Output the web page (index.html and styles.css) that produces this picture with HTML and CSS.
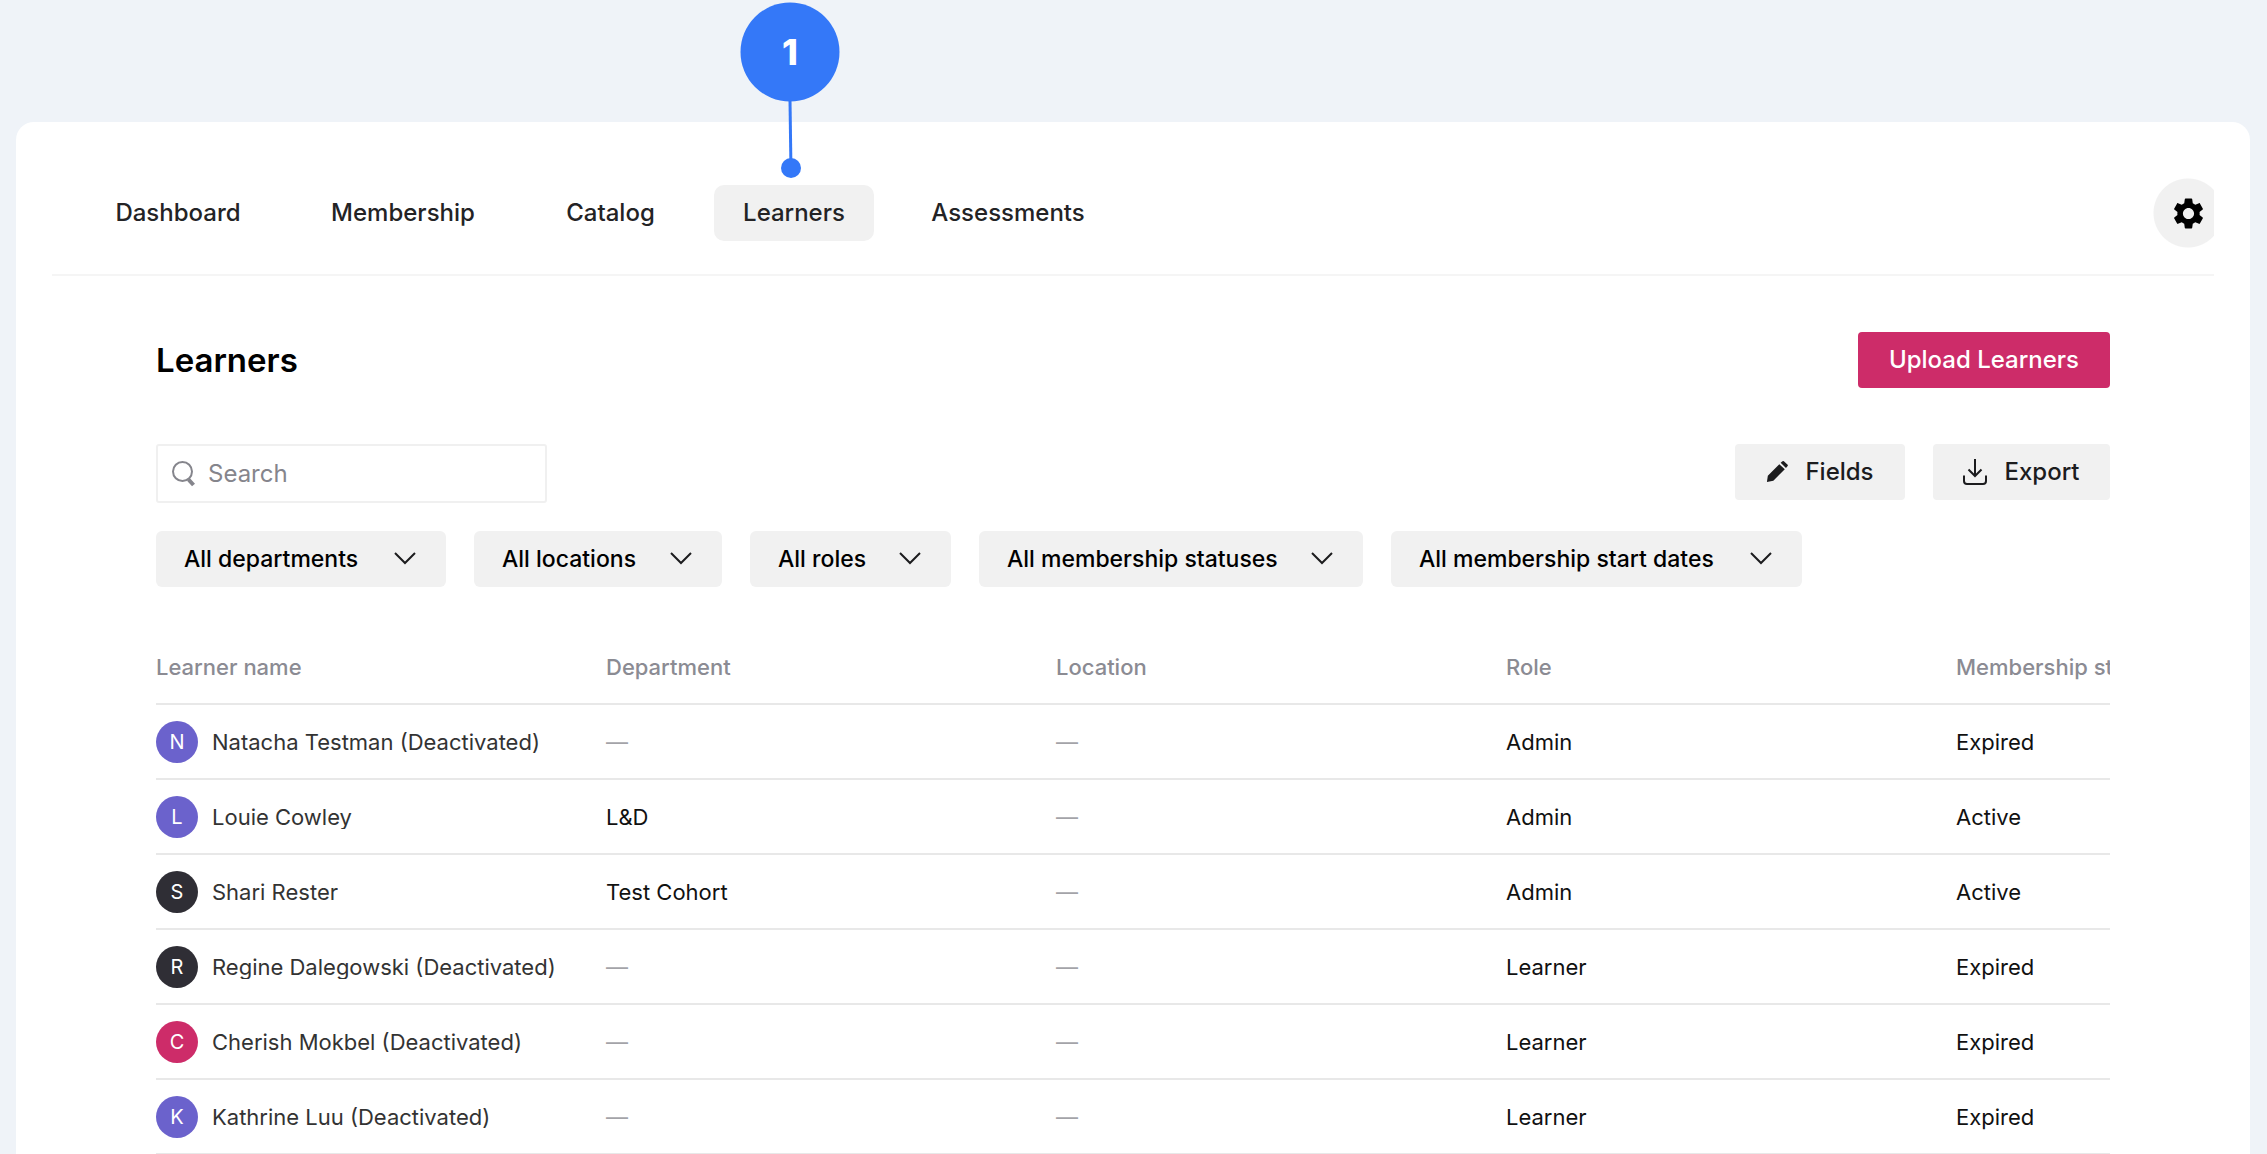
FILE: index.html
```html
<!DOCTYPE html>
<html lang="en">
<head>
<meta charset="utf-8">
<meta name="viewport" content="width=device-width, initial-scale=1">
<title>Learners</title>
<link rel="stylesheet" href="styles.css">
</head>
<body>
<div class="card">
  <header class="topbar">
    <nav class="nav" aria-label="Main">
      <a class="nav-link" href="#dashboard">Dashboard</a>
      <a class="nav-link" href="#membership">Membership</a>
      <a class="nav-link" href="#catalog">Catalog</a>
      <a class="nav-link nav-link-active" href="#learners" aria-current="page">Learners
        <span class="callout" aria-hidden="true">
          <svg class="callout-pin" viewBox="0 0 100 180"><path d="M50 98L51 170" stroke="currentColor" stroke-width="3"/><circle cx="50" cy="50" r="49.500" fill="currentColor"/><circle cx="51" cy="166" r="10" fill="currentColor"/></svg>
          <span class="callout-number">1</span>
        </span>
      </a>
      <a class="nav-link" href="#assessments">Assessments</a>
    </nav>
    <button class="settings" type="button" aria-label="Settings">
      <svg class="icon-gear" viewBox="2 2 20 20"><path fill="currentColor" d="M19.140 12.940c.04-.3.060-.61.060-.94 0-.32-.02-.64-.07-.94l2.030-1.580c.18-.14.230-.41.120-.61l-1.920-3.320c-.12-.22-.37-.29-.59-.22l-2.390.960c-.5-.38-1.030-.7-1.620-.94L14.400 2.810c-.04-.24-.24-.41-.48-.41h-3.840c-.24 0-.43.170-.47.410L9.250 5.350c-.59.240-1.130.57-1.620.94L5.240 5.330c-.22-.08-.47 0-.59.220L2.740 8.870c-.12.210-.08.470.120.610l2.030 1.580c-.05.3-.09.630-.09.940s.02.640.070.940l-2.030 1.580c-.18.140-.23.410-.12.610l1.920 3.320c.12.220.37.290.59.220l2.390-.96c.5.380 1.030.7 1.620.940l.36 2.540c.05.240.240.410.480.410h3.840c.24 0 .44-.17.470-.41l.36-2.540c.59-.24 1.130-.56 1.620-.94l2.390.960c.22.080.470 0 .59-.22l1.920-3.320c.12-.22.070-.47-.12-.61l-2.010-1.580zM12 15.600c-1.980 0-3.600-1.620-3.600-3.600s1.620-3.600 3.600-3.600 3.600 1.620 3.600 3.600-1.620 3.600-3.600 3.600z"/></svg>
    </button>
  </header>

  <main class="content">
    <div class="row">
      <h1 class="title">Learners</h1>
      <button class="button button-primary" type="button">Upload Learners</button>
    </div>

    <div class="row row-tools">
      <label class="search">
        <svg class="icon-search" viewBox="0 0 24 26" fill="none" stroke="currentColor"><circle cx="10.500" cy="10.500" r="9.500" stroke-width="2"/><path d="M16.500 18.500L21.500 24" stroke-width="4"/></svg>
        <input class="search-input" type="search" placeholder="Search" aria-label="Search">
      </label>
      <div class="actions">
        <button class="button button-fields" type="button">
          <svg class="icon-pencil" viewBox="0 0 24 24" fill="currentColor"><path d="M1 23l1-7L14.500 3.500 20.500 9 8 21.500zM16 2l2-1.600q.8-.6 1.500 0L23.600 4q.6.700 0 1.400L21.800 7.600z"/></svg>
          Fields
        </button>
        <button class="button button-export" type="button">
          <svg class="icon-export" viewBox="0 0 24 26" fill="none" stroke="currentColor" stroke-width="2"><path d="M12 0v17M5.500 10.500L12 17l6.500-6.500M1 16.500V22q0 3 3 3h16q3 0 3-3v-5.500"/></svg>
          Export
        </button>
      </div>
    </div>

    <div class="filters">
      <span class="filter"><select class="select select-departments" aria-label="Department"><option>All departments</option></select><svg class="icon-chevron" viewBox="0 0 22 13"><path d="M1 1l10 10L21 1" fill="none" stroke="currentColor" stroke-width="2"/></svg></span>
      <span class="filter"><select class="select select-locations" aria-label="Location"><option>All locations</option></select><svg class="icon-chevron" viewBox="0 0 22 13"><path d="M1 1l10 10L21 1" fill="none" stroke="currentColor" stroke-width="2"/></svg></span>
      <span class="filter"><select class="select select-roles" aria-label="Role"><option>All roles</option></select><svg class="icon-chevron" viewBox="0 0 22 13"><path d="M1 1l10 10L21 1" fill="none" stroke="currentColor" stroke-width="2"/></svg></span>
      <span class="filter"><select class="select select-statuses" aria-label="Membership status"><option>All membership statuses</option></select><svg class="icon-chevron" viewBox="0 0 22 13"><path d="M1 1l10 10L21 1" fill="none" stroke="currentColor" stroke-width="2"/></svg></span>
      <span class="filter"><select class="select select-dates" aria-label="Membership start date"><option>All membership start dates</option></select><svg class="icon-chevron" viewBox="0 0 22 13"><path d="M1 1l10 10L21 1" fill="none" stroke="currentColor" stroke-width="2"/></svg></span>
    </div>

    <div class="table-scroll">
      <table class="table">
        <thead>
          <tr><th scope="col">Learner name</th><th scope="col">Department</th><th scope="col">Location</th><th scope="col">Role</th><th scope="col">Membership status</th></tr>
        </thead>
        <tbody>
          <tr><td><div class="person"><span class="avatar avatar-violet">N</span><span class="name">Natacha Testman (Deactivated)</span></div></td><td class="empty">—</td><td class="empty">—</td><td>Admin</td><td>Expired</td></tr>
          <tr><td><div class="person"><span class="avatar avatar-violet">L</span><span class="name">Louie Cowley</span></div></td><td>L&amp;D</td><td class="empty">—</td><td>Admin</td><td>Active</td></tr>
          <tr><td><div class="person"><span class="avatar avatar-dark">S</span><span class="name">Shari Rester</span></div></td><td>Test Cohort</td><td class="empty">—</td><td>Admin</td><td>Active</td></tr>
          <tr><td><div class="person"><span class="avatar avatar-dark">R</span><span class="name">Regine Dalegowski (Deactivated)</span></div></td><td class="empty">—</td><td class="empty">—</td><td>Learner</td><td>Expired</td></tr>
          <tr><td><div class="person"><span class="avatar avatar-pink">C</span><span class="name">Cherish Mokbel (Deactivated)</span></div></td><td class="empty">—</td><td class="empty">—</td><td>Learner</td><td>Expired</td></tr>
          <tr><td><div class="person"><span class="avatar avatar-violet">K</span><span class="name">Kathrine Luu (Deactivated)</span></div></td><td class="empty">—</td><td class="empty">—</td><td>Learner</td><td>Expired</td></tr>
        </tbody>
      </table>
    </div>
  </main>
</div>
</body>
</html>
```
FILE: styles.css
```css
*,
*::before,
*::after {
  box-sizing: border-box;
}

body {
  margin: 0;
  padding: 122px 17px 0 16px;
  min-height: 100vh;
  display: flex;
  flex-direction: column;
  background: #eff3f8;
  color: #1c1c1e;
  font-family: Inter, "Liberation Sans", sans-serif;
  font-size: 22px;
  line-height: 28px;
}

button,
input,
select {
  font: inherit;
  color: inherit;
}

svg {
  display: block;
  flex: none;
}

.card {
  flex: 1;
  min-width: 0;
  padding: 0 36px;
  border-radius: 18px 18px 0 0;
  background: #fff;
}

/* Top navigation */

.topbar {
  display: flex;
  align-items: center;
  justify-content: space-between;
  height: 154px;
  padding: 28px 0 0 33px;
  border-bottom: 2px solid #f5f5f5;
}

.topbar {
  padding-top: 30px;
}

.nav {
  display: grid;
  grid-template-columns: 186px 208px 151px 160px 212px;
  gap: 28px;
}

.nav-link {
  position: relative;
  display: flex;
  align-items: center;
  justify-content: center;
  height: 56px;
  border-radius: 10px;
  color: #232325;
  font-size: 24px;
  font-weight: 500;
  text-decoration: none;
}

.nav-link-active {
  background: #f1f1f1;
}

.settings {
  flex: none;
  width: 61px;
  height: 70px;
  padding: 0 0 0 20px;
  border: 0;
  border-radius: 0;
  background: radial-gradient(circle at 35px 35px, #f1f1f1 34px, transparent 35px);
  color: #000;
}

.icon-gear {
  width: 31px;
  height: 31px;
}

.callout {
  position: absolute;
  bottom: 59px;
  left: 26px;
  width: 100px;
  height: 180px;
  color: #3478f8;
}

.callout-pin {
  width: 100px;
  height: 180px;
}

.callout-number {
  position: absolute;
  inset: 0 0 auto;
  color: #fff;
  font-size: 36px;
  font-weight: 800;
  line-height: 100px;
  text-align: center;
}

/* Page content */

.content {
  padding: 56px 104px 0;
}

.row {
  display: flex;
  align-items: center;
  justify-content: space-between;
}

.row-tools {
  align-items: flex-start;
  margin-top: 56px;
}

.title {
  margin: 0;
  color: #000;
  font-size: 33px;
  font-weight: 600;
  line-height: 40px;
}

.button {
  display: flex;
  align-items: center;
  justify-content: center;
  gap: 17px;
  height: 56px;
  padding: 0 28px;
  border: 0;
  border-radius: 4px;
  background: #f1f1f1;
  font-size: 24px;
  font-weight: 500;
}

.button-primary {
  width: 252px;
  background: #cd2c69;
  color: #fff;
}

.button-fields {
  width: 170px;
}

.button-export {
  width: 177px;
}

.actions {
  display: flex;
  gap: 28px;
}

.icon-pencil {
  width: 22px;
  height: 24px;
}

.icon-export {
  width: 24px;
  height: 26px;
}

.search {
  display: flex;
  align-items: center;
  gap: 12px;
  width: 391px;
  height: 59px;
  padding: 0 14px;
  border: 2px solid #f0f0f0;
  border-radius: 3px;
  color: #85858c;
}

.icon-search {
  width: 24px;
  height: 26px;
}

.search-input {
  flex: 1;
  min-width: 0;
  padding: 0;
  border: 0;
  outline: 0;
  background: none;
  font-size: 24px;
}

.search-input::placeholder {
  color: #85858c;
  opacity: 1;
}

.filters {
  display: flex;
  flex-wrap: wrap;
  gap: 28px;
  margin-top: 28px;
}

.filter {
  position: relative;
}

.select {
  display: block;
  height: 56px;
  padding: 0 28px;
  appearance: none;
  border: 0;
  border-radius: 6px;
  background: #f1f1f1;
  color: #000;
  font-size: 23px;
  font-weight: 500;
}

.select-departments {
  width: 290px;
}

.select-locations {
  width: 248px;
}

.select-roles {
  width: 201px;
}

.select-statuses {
  width: 384px;
}

.select-dates {
  width: 411px;
}

.icon-chevron {
  position: absolute;
  top: 21px;
  right: 30px;
  width: 22px;
  height: 13px;
  pointer-events: none;
}

/* Learner table */

.table-scroll {
  margin-top: 44px;
  overflow: hidden;
}

.table {
  width: 2250px;
  border-collapse: separate;
  border-spacing: 0;
  table-layout: fixed;
}

.table th,
.table td {
  height: 75px;
  padding: 0;
  border-bottom: 2px solid #e8e8e8;
  color: #111;
  text-align: left;
  vertical-align: middle;
}

.table th {
  height: 74px;
  color: #8b8b93;
  font-weight: 500;
}

.table tr:last-child td {
  height: 74px;
  border-bottom-width: 1px;
}

.table .empty {
  color: #a3a3a8;
}

.person {
  display: flex;
  align-items: center;
  gap: 14px;
}

.avatar {
  width: 42px;
  height: 42px;
  border-radius: 50%;
  color: #fff;
  font-size: 20px;
  line-height: 42px;
  text-align: center;
}

.avatar-violet {
  background: #6b62cc;
}

.avatar-dark {
  background: #2f2e35;
}

.avatar-pink {
  background: #cd2c69;
}

.name {
  overflow: hidden;
  color: #333;
  line-height: 24px;
  white-space: nowrap;
}
```
